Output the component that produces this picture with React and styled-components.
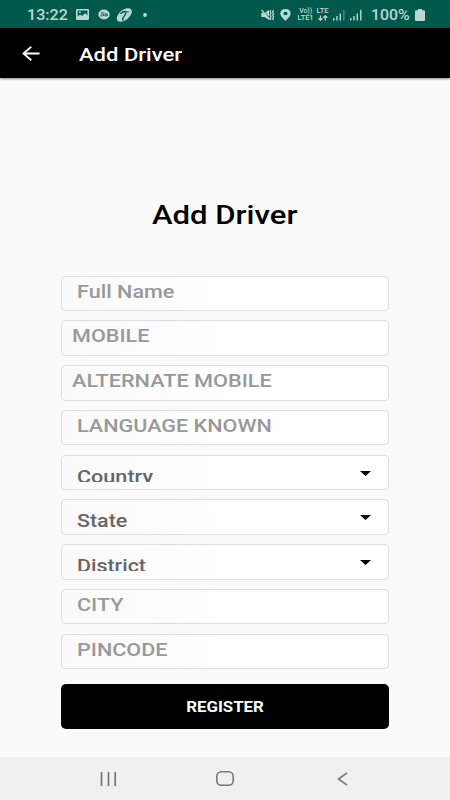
import React from 'react';
import styled, { createGlobalStyle } from 'styled-components';

const GlobalStyle = createGlobalStyle`
  * { box-sizing: border-box; }
  body {
    margin: 0;
    background: #fafafa;
    font-family: Roboto, 'Liberation Sans', sans-serif;
  }
`;

const Screen = styled.div`
  width: 450px;
  height: 800px;
  display: flex;
  flex-direction: column;
  overflow: hidden;
  background: #fafafa;
`;

const StatusBar = styled.div`
  height: 28px;
  flex: none;
  display: flex;
  justify-content: space-between;
  background: #01594c;
  color: #b9d8d2;
  padding: 0 25px 0 27px;
`;

const StatusGroup = styled.div`
  display: flex;
  align-items: center;
  height: 29px;
`;

const Wide = styled.span`
  display: block;
  white-space: nowrap;
  transform: scaleX(${(p) => p.$scale});
  transform-origin: ${(p) => p.$origin || 'left'} center;
`;

const StatusText = styled.div`
  width: ${(p) => p.$width}px;
  margin-left: ${(p) => p.$gap || 0}px;
  font-size: 14px;
  font-weight: 500;
  line-height: 28px;
  height: 28px;
`;

const Icon = styled.svg`
  display: block;
  flex: none;
  margin-left: ${(p) => p.$gap || 0}px;
`;

const Network = styled.div`
  width: ${(p) => p.$width}px;
  margin-left: ${(p) => p.$gap}px;
  height: 14px;
  display: flex;
  flex-direction: column;
  align-items: center;
  font-size: 7px;
  font-weight: 500;
  line-height: 7px;
`;

const AppBar = styled.header`
  height: 50px;
  flex: none;
  display: flex;
  align-items: center;
  padding-left: 22px;
  background: #000;
  color: #fff;
  box-shadow: 0 1px 2px rgba(0, 0, 0, 0.45);
`;

const BarTitle = styled.div`
  margin-left: 39px;
  font-size: 19px;
  font-weight: 500;
  line-height: 22px;
  padding-top: 3px;
`;

const Content = styled.main`
  flex: 1;
  display: flex;
  flex-direction: column;
  align-items: center;
  padding-top: 119px;
`;

const Heading = styled.h1`
  margin: 0;
  height: 36px;
  font-size: 25.5px;
  font-weight: 500;
  line-height: 36px;
  color: #000;
`;

const Form = styled.form`
  width: 328px;
  margin-top: 42.7px;
  display: flex;
  flex-direction: column;
  gap: 9.15px;
`;

const Field = styled.div`
  height: 35.6px;
  flex: none;
  display: flex;
  justify-content: space-between;
  border: 1px solid #dfdfdf;
  border-radius: 4px;
  background: linear-gradient(90deg, #fafafa 0, #fcfcfc 30%, #fff 48%);
  padding: 0 17.5px 0 ${(p) => (p.$tight ? 10 : 15)}px;
`;

const Placeholder = styled.div`
  padding-top: 4px;
  font-size: 18px;
  font-weight: 500;
  line-height: 22px;
  color: #999;
`;

const Selected = styled.div`
  height: 19.4px;
  margin-top: 7px;
  padding-top: 3px;
  overflow: hidden;
  width: 130px;
  font-size: 18px;
  font-weight: 500;
  line-height: 22px;
  color: #666;
`;

const Caret = styled.svg`
  display: block;
  margin-top: 15px;
`;

const Register = styled.button`
  height: 45px;
  width: 328px;
  margin-top: 5.6px;
  border: 0;
  border-radius: 5px;
  background: #000;
  color: #fff;
  font-family: inherit;
  font-size: 14px;
  font-weight: 700;
  padding: 1px 0 0;
`;

const NavBar = styled.nav`
  height: 43px;
  flex: none;
  display: grid;
  grid-template-columns: repeat(3, 117px);
  justify-content: center;
  justify-items: center;
  align-items: center;
  background: #f0f0f0;
`;

const fields = [
  { label: 'Full Name', scale: 1.2 },
  { label: 'MOBILE', tight: true, scale: 1.2 },
  { label: 'ALTERNATE MOBILE', tight: true, scale: 1.205 },
  { label: 'LANGUAGE KNOWN', scale: 1.2 },
  { label: 'Country', select: true, scale: 1.2 },
  { label: 'State', select: true, scale: 1.19 },
  { label: 'District', select: true, scale: 1.19 },
  { label: 'CITY', scale: 1.2 },
  { label: 'PINCODE', scale: 1.2 },
];

function Signal({ gap, faint }) {
  return (
    <Icon $gap={gap} width="12" height="12" viewBox="0 0 12 12" stroke="#b9d8d2" strokeWidth="1.4">
      <path d="M.8 9v2.500M4 7v4.500M7.300 4.500v7" />
      <path d="M10.800 .8v10.700" opacity={faint ? 0.4 : 1} />
    </Icon>
  );
}

export default function App() {
  return (
    <Screen>
      <GlobalStyle />
      <StatusBar>
        <StatusGroup>
          <StatusText $width={49}><Wide $scale={1.15}>13:22</Wide></StatusText>
          <Icon width="13" height="11" viewBox="0 0 13 11">
            <path fill="#b9d8d2" fillRule="evenodd" d="M1 0h11q1 0 1 1v9q0 1-1 1H1q-1 0-1-1V1q0-1 1-1Zm.7 1.500v6l2.400-2 2 1.500 3-3 2.300 2.400V1.500ZM3 2.500h1.800v1.600H3Z" />
          </Icon>
          <Icon $gap={8.5} width="12" height="11" viewBox="0 0 12 11">
            <ellipse cx="6" cy="5.500" rx="5.700" ry="5" fill="#b9d8d2" />
            <path d="M4 3v3.200q0 1-1.600.8M5.700 4.600v2.500M5.700 3v.6" fill="none" stroke="#01594c" strokeWidth="1" />
            <ellipse cx="8.200" cy="5.800" rx="1.300" ry="1.100" fill="none" stroke="#01594c" />
          </Icon>
          <Icon $gap={6} width="17" height="14" viewBox="0 0 17 14">
            <ellipse cx="8.300" cy="7" rx="8.800" ry="5" transform="rotate(-39 8.300 7)" fill="#b9d8d2" />
            <path d="M4.300 5.700Q7.500 3.200 10 3.600 10.800 4.800 7.200 9.600 6 12 7.500 12.500" fill="none" stroke="#01594c" strokeWidth="1.400" />
            <path d="M12 3.300v1.200" stroke="#01594c" strokeWidth="1.200" />
          </Icon>
          <Icon $gap={10} width="4" height="4" viewBox="0 0 4 4"><circle cx="2" cy="2" r="1.900" fill="#b9d8d2" /></Icon>
        </StatusGroup>
        <StatusGroup>
          <Icon width="14" height="12" viewBox="0 0 14 12">
            <path fill="#b9d8d2" d="M.3 4h3L8 1v9.800L3.300 8h-3Z" />
            <path d="m1.900.8 7.200 8.600" stroke="#01594c" strokeWidth=".8" />
            <path d="m.6 1 8 9.500" stroke="#b9d8d2" strokeWidth="1.300" />
            <path d="m10 1.200-1 1.500 1 1.700L9 6l1 1.600-1 1.800 1 1.500M12.600 1.200l-1 1.500 1 1.700-1 1.600 1 1.600-1 1.800 1 1.500" fill="none" stroke="#b9d8d2" strokeWidth="1.200" />
          </Icon>
          <Icon $gap={5} width="11" height="12" viewBox="0 0 11 12">
            <path fill="#b9d8d2" fillRule="evenodd" d="M5.500 0C2.200 0 .3 2 .3 4.500.3 7.500 3.500 9.500 5.500 12c2-2.500 5.200-4.500 5.200-7.500C10.700 2 8.800 0 5.500 0Zm0 2.700a2.100 1.800 0 1 1 0 3.600 2.100 1.800 0 0 1 0-3.600Z" />
          </Icon>
          <Network $width={17} $gap={6}>
            <Wide $scale={0.98} $origin="center">Vo))</Wide>
            <Wide $scale={1.06} $origin="center">LTE1</Wide>
          </Network>
          <Network $width={13} $gap={2}>
            <Wide $scale={1.08} $origin="center">LTE</Wide>
            <Icon width="10" height="6" viewBox="0 0 10 6" fill="none" stroke="#b9d8d2" strokeWidth="1.300">
              <path d="M2.500 .5v5M.5 3.200l2 2 2-2M7.300 5.500v-5M5.300 2.800l2-2 2 2" />
            </Icon>
          </Network>
          <Signal gap={4} faint />
          <Signal gap={5} />
          <StatusText $width={44} $gap={9}><Wide $scale={1.13}>100%</Wide></StatusText>
          <Icon width="10" height="12" viewBox="0 0 10 12">
            <path fill="#b9d8d2" d="M3 0h4v1.300h2q1 0 1 1V11q0 1-1 1H1q-1 0-1-1V2.300q0-1 1-1h2Z" />
          </Icon>
        </StatusGroup>
      </StatusBar>

      <AppBar>
        <Icon width="18" height="15" viewBox="0 0 18 15" fill="none" stroke="#fff" strokeWidth="1.800">
          <path d="M17.500 7.500H1.500M9.300.8 1.500 7.500l7.800 6.700" />
        </Icon>
        <BarTitle><Wide $scale={1.16}>Add Driver</Wide></BarTitle>
      </AppBar>

      <Content>
        <Heading><Wide $scale={1.22} $origin="center">Add Driver</Wide></Heading>
        <Form>
          {fields.map((f) => (
            <Field key={f.label} $tight={f.tight}>
              {f.select ? (
                <>
                  <Selected><Wide $scale={f.scale}>{f.label}</Wide></Selected>
                  <Caret width="11" height="5" viewBox="0 0 11 5"><path d="M0 0h11L5.500 5Z" /></Caret>
                </>
              ) : (
                <Placeholder><Wide $scale={f.scale}>{f.label}</Wide></Placeholder>
              )}
            </Field>
          ))}
          <Register type="button"><Wide $scale={1.2} $origin="center">REGISTER</Wide></Register>
        </Form>
      </Content>

      <NavBar>
        <Icon width="17" height="14" viewBox="0 0 17 14" stroke="#777" strokeWidth="1.700">
          <path d="M1.500 0v14M8.500 0v14M15.200 0v14" />
        </Icon>
        <Icon width="18" height="15" viewBox="0 0 18 15" fill="none" stroke="#777" strokeWidth="1.600">
          <rect x=".8" y=".8" width="16.400" height="13.400" rx="4.500" />
        </Icon>
        <Icon width="11" height="14" viewBox="0 0 11 14" fill="none" stroke="#777" strokeWidth="1.600">
          <path d="M10 .8 1.500 7l8.500 6.200" />
        </Icon>
      </NavBar>
    </Screen>
  );
}
